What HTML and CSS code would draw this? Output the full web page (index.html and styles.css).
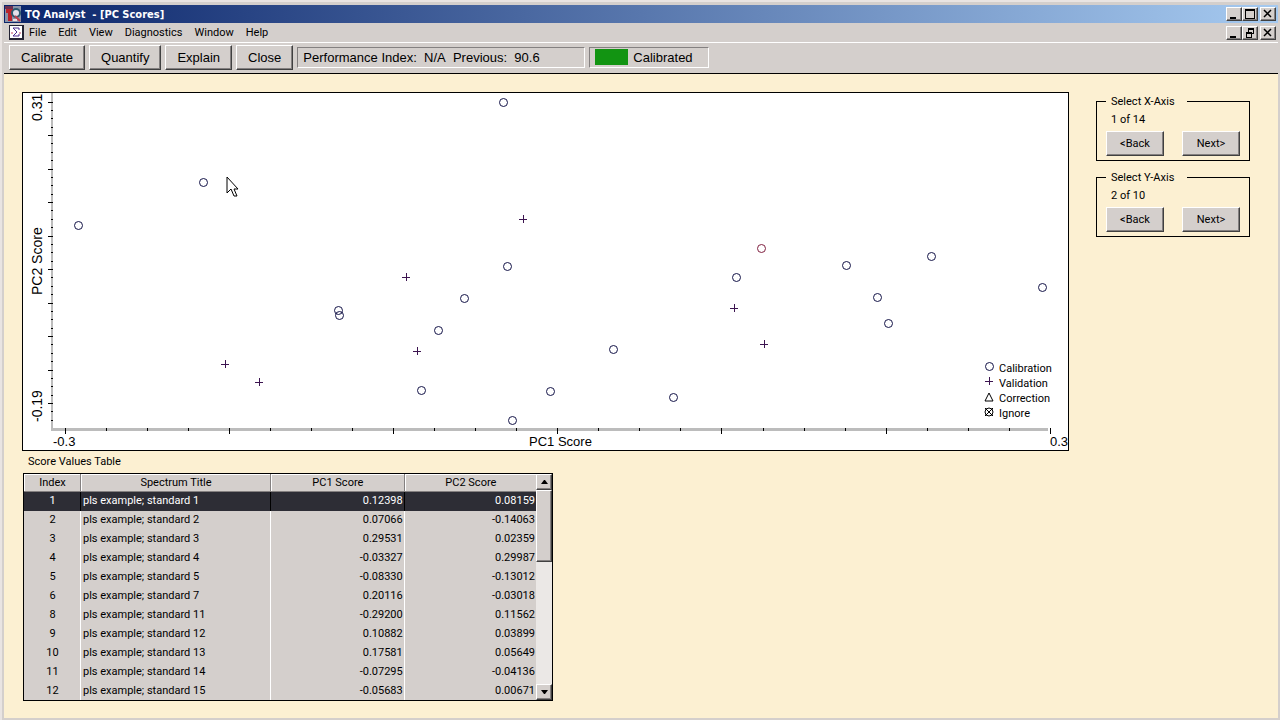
FILE: index.html
```html
<!DOCTYPE html>
<html lang="en">
<head>
    <meta charset="UTF-8">
    <meta name="viewport" content="width=device-width, initial-scale=1.0">
    <title>TQ Analyst - [PC Scores]</title>
    <link rel="stylesheet" href="styles.css">
</head>
<body>
    <header class="title-bar">
        <svg class="app-icon" viewBox="0 0 16 16">
            <rect width="16" height="16" fill="#8a93a8"></rect>
            <path d="M0 0h8v3H0z" fill="#6c3050"></path>
            <path d="M1 3h8v4H7v8H3V7H1z" fill="#b8242c"></path>
            <circle cx="11" cy="7" r="4" fill="#e4e0ea" stroke="#2c5a70" stroke-width="2"></circle>
            <path d="M10 10l5 5" stroke="#c0404c" stroke-width="2"></path>
            <path d="M8 13h4v2H8z" fill="#f0dce0"></path>
        </svg>
        <h1>TQ Analyst&nbsp; - [PC Scores]</h1>
        <div class="window-buttons">
            <button class="window-button" aria-label="Minimize"><svg viewBox="0 0 12 10"><path d="M2 8h6v2H2z"></path></svg></button>
            <button class="window-button" aria-label="Maximize"><svg viewBox="0 0 12 10"><path fill-rule="evenodd" d="M1 0h10v10H1zM2 2v7h8V2z"></path></svg></button>
            <button class="window-button close" aria-label="Close"><svg viewBox="0 0 12 10"><path class="cross" d="M2 1l7 7M9 1l-7 7"></path></svg></button>
        </div>
    </header>

    <nav class="menu-bar">
        <svg class="doc-icon" viewBox="0 0 15 15">
            <path d="M0 0h15v15H0z" fill="#223"></path>
            <path d="M1 1h12v12H1z" fill="#fff"></path>
            <path d="M10 5V3H4l4 4-4 4h6V9" fill="none" stroke="#4a2a8c"></path>
            <path d="M2 8h2M10 8h2" stroke="#c04060"></path>
        </svg>
        <a href="#">File</a>
        <a href="#">Edit</a>
        <a href="#">View</a>
        <a href="#">Diagnostics</a>
        <a href="#">Window</a>
        <a href="#">Help</a>
        <div class="window-buttons">
            <button class="window-button" aria-label="Minimize document"><svg viewBox="0 0 12 10"><path d="M2 8h6v2H2z"></path></svg></button>
            <button class="window-button" aria-label="Restore document"><svg viewBox="0 0 12 10"><path fill-rule="evenodd" d="M4 0h6v6H8v4H2V4h2zM5 2v2h3v1h1V2zM3 6v3h4V6z"></path></svg></button>
            <button class="window-button close" aria-label="Close document"><svg viewBox="0 0 12 10"><path class="cross" d="M2 1l7 7M9 1l-7 7"></path></svg></button>
        </div>
    </nav>

    <div class="toolbar">
        <button class="tool-button">Calibrate</button>
        <button class="tool-button">Quantify</button>
        <button class="tool-button">Explain</button>
        <button class="tool-button">Close</button>
        <div class="status performance">Performance Index:&nbsp; N/A&nbsp; Previous:&nbsp; 90.6</div>
        <div class="status state"><span class="lamp"></span>Calibrated</div>
    </div>

    <main class="workspace">
        <div class="scores">
            <svg class="plot" viewBox="0 0 1045 357">
                <defs>
                    <circle id="calibration" cx="0.5" cy="0.5" r="4"></circle>
                    <path id="validation" d="M-4 0h8M0-4v8"></path>
                </defs>

                <!-- axes -->
                <path class="axis" d="M28 0h2v335h-2zM28 335h997v3H28z"></path>
                <path class="ticks" d="M25 9h5M25 42h5M25 76h5M25 109h5M25 143h5M25 176h5M25 210h5M25 243h5M25 277h5M25 310h5"></path>
                <path class="ticks" d="M28 17h2M28 25h2M28 34h2M28 50h2M28 59h2M28 67h2M28 84h2M28 92h2M28 101h2M28 117h2M28 126h2M28 134h2M28 151h2M28 159h2M28 168h2M28 184h2M28 193h2M28 201h2M28 218h2M28 226h2M28 235h2M28 251h2M28 260h2M28 268h2M28 285h2M28 293h2M28 302h2M28 318h2M28 327h2"></path>
                <path class="ticks" d="M42 335v6M206 335v6M370 335v6M534 335v6M698 335v6M863 335v6M1027 335v6"></path>
                <path class="ticks" d="M83 335v3M124 335v3M165 335v3M247 335v3M288 335v3M329 335v3M411 335v3M452 335v3M493 335v3M575 335v3M616 335v3M657 335v3M740 335v3M781 335v3M822 335v3M904 335v3M945 335v3M986 335v3"></path>
                <text class="axis-text" x="30" y="353">-0.3</text>
                <text class="axis-text" x="506" y="353">PC1 Score</text>
                <text class="axis-text" x="1027" y="353">0.3</text>
                <text class="axis-text side" transform="translate(19 28) rotate(-90)">0.31</text>
                <text class="axis-text side" transform="translate(19 202) rotate(-90)">PC2 Score</text>
                <text class="axis-text side" transform="translate(19 329) rotate(-90)">-0.19</text>

                <g class="calibration">
                    <use href="#calibration" x="55" y="132"></use>
                    <use href="#calibration" x="180" y="89"></use>
                    <use href="#calibration" x="480" y="9"></use>
                    <use href="#calibration" x="484" y="173"></use>
                    <use href="#calibration" x="441" y="205"></use>
                    <use href="#calibration" x="315" y="217"></use>
                    <use href="#calibration" x="316" y="222"></use>
                    <use href="#calibration" x="415" y="237"></use>
                    <use href="#calibration" x="398" y="297"></use>
                    <use href="#calibration" x="489" y="327"></use>
                    <use href="#calibration" x="527" y="298"></use>
                    <use href="#calibration" x="590" y="256"></use>
                    <use href="#calibration" x="650" y="304"></use>
                    <use href="#calibration" x="713" y="184"></use>
                    <use href="#calibration" x="823" y="172"></use>
                    <use href="#calibration" x="854" y="204"></use>
                    <use href="#calibration" x="865" y="230"></use>
                    <use href="#calibration" x="908" y="163"></use>
                    <use href="#calibration" x="1019" y="194"></use>
                </g>
                <use class="selected" href="#calibration" x="738" y="155"></use>
                <g class="validation">
                    <use href="#validation" x="500" y="126"></use>
                    <use href="#validation" x="383" y="184"></use>
                    <use href="#validation" x="394" y="258"></use>
                    <use href="#validation" x="202" y="271"></use>
                    <use href="#validation" x="236" y="289"></use>
                    <use href="#validation" x="711" y="215"></use>
                    <use href="#validation" x="741" y="251"></use>
                </g>

                <!-- legend -->
                <use class="calibration" href="#calibration" x="966" y="273"></use>
                <use class="validation" href="#validation" x="966" y="288"></use>
                <path class="mark" d="M966 300l4 8h-8z"></path>
                <g class="mark">
                    <circle cx="966" cy="319" r="4"></circle>
                    <path d="M962 315l8 8M970 315l-8 8"></path>
                </g>
                <text class="legend-text" x="976" y="279">Calibration</text>
                <text class="legend-text" x="976" y="294">Validation</text>
                <text class="legend-text" x="976" y="309">Correction</text>
                <text class="legend-text" x="976" y="324">Ignore</text>

                <!-- pointer -->
                <path class="pointer" d="M204 84v16l4-4 3 7h3l-3-7h4z"></path>
            </svg>

            <h2 id="table-title">Score Values Table</h2>
            <div class="table-frame">
                <table class="score-table" aria-labelledby="table-title">
                    <thead>
                        <tr><th class="index">Index</th><th class="title">Spectrum Title</th><th>PC1 Score</th><th>PC2 Score</th></tr>
                    </thead>
                    <tbody>
                        <tr class="current"><td>1</td><td>pls example; standard 1</td><td>0.12398</td><td>0.08159</td></tr>
                        <tr><td>2</td><td>pls example; standard 2</td><td>0.07066</td><td>-0.14063</td></tr>
                        <tr><td>3</td><td>pls example; standard 3</td><td>0.29531</td><td>0.02359</td></tr>
                        <tr><td>4</td><td>pls example; standard 4</td><td>-0.03327</td><td>0.29987</td></tr>
                        <tr><td>5</td><td>pls example; standard 5</td><td>-0.08330</td><td>-0.13012</td></tr>
                        <tr><td>6</td><td>pls example; standard 7</td><td>0.20116</td><td>-0.03018</td></tr>
                        <tr><td>8</td><td>pls example; standard 11</td><td>-0.29200</td><td>0.11562</td></tr>
                        <tr><td>9</td><td>pls example; standard 12</td><td>0.10882</td><td>0.03899</td></tr>
                        <tr><td>10</td><td>pls example; standard 13</td><td>0.17581</td><td>0.05649</td></tr>
                        <tr><td>11</td><td>pls example; standard 14</td><td>-0.07295</td><td>-0.04136</td></tr>
                        <tr><td>12</td><td>pls example; standard 15</td><td>-0.05683</td><td>0.00671</td></tr>
                    </tbody>
                </table>
                <div class="scrollbar">
                    <button class="scroll-button" aria-label="Scroll up"><svg viewBox="0 0 7 4"><path d="M3 0h1l3 4H0z"></path></svg></button>
                    <div class="scroll-thumb"></div>
                    <button class="scroll-button down" aria-label="Scroll down"><svg viewBox="0 0 7 4"><path d="M0 0h7L4 4H3z"></path></svg></button>
                </div>
            </div>
        </div>

        <aside class="axis-panel">
            <fieldset>
                <legend>Select X-Axis</legend>
                <p>1 of 14</p>
                <div class="axis-buttons">
                    <button>&lt;Back</button>
                    <button>Next&gt;</button>
                </div>
            </fieldset>
            <fieldset>
                <legend>Select Y-Axis</legend>
                <p>2 of 10</p>
                <div class="axis-buttons">
                    <button>&lt;Back</button>
                    <button>Next&gt;</button>
                </div>
            </fieldset>
        </aside>
    </main>
</body>
</html>
```
FILE: styles.css
```css
* {
    box-sizing: border-box;
}
body {
    display: flex;
    flex-direction: column;
    min-height: 100vh;
    margin: 0;
    padding: 5px 2px 2px 4px;
    background: #d4cfcc;
    color: #000;
    font-family: Roboto, "Liberation Sans", Arial, sans-serif;
    font-size: 11px;
    box-shadow: inset 2px 2px #e9e4e2;
}
h1, h2, p {
    margin: 0;
    font-size: 11px;
    font-weight: normal;
}
button {
    padding: 0;
    border: 1px solid;
    border-color: #fff #404040 #404040 #fff;
    background: #d4cfcc;
    box-shadow: inset -1px -1px #848080;
    color: #000;
    font: inherit;
}

.title-bar {
    display: flex;
    align-items: center;
    gap: 4px;
    height: 18px;
    padding: 0 2px 0 1px;
    background: linear-gradient(to right, #0a246a, #a6caf0);
    color: #fff;
}
.title-bar h1 {
    font-family: "DejaVu Sans Condensed", Tahoma, sans-serif;
    font-weight: bold;
}
.app-icon {
    width: 16px;
    height: 16px;
}
.window-buttons {
    display: flex;
    margin-left: auto;
}
.window-button {
    display: flex;
    width: 16px;
    height: 14px;
    padding: 1px;
}
.window-button.close {
    margin-left: 2px;
}
.window-button svg {
    width: 12px;
    height: 10px;
}
.cross {
    fill: none;
    stroke: #000;
    stroke-width: 1.5;
}

.menu-bar {
    display: flex;
    align-items: center;
    gap: 12px;
    height: 20px;
    padding: 0 2px 0 5px;
    border-bottom: 1px solid #fff;
}
.menu-bar a {
    color: #000;
    text-decoration: none;
}
.doc-icon {
    width: 15px;
    height: 15px;
    margin-right: -7px;
}

.toolbar {
    display: flex;
    align-items: center;
    gap: 4px;
    height: 31px;
    padding: 0 5px 2px;
    border-bottom: 1px solid #000;
    font-family: "Liberation Sans", Arial, sans-serif;
    font-size: 13px;
}
.tool-button {
    height: 25px;
    padding: 0 11px;
}
.status {
    display: flex;
    align-items: center;
    gap: 5px;
    height: 21px;
    padding: 0 5px;
    border: 1px solid;
    border-color: #848080 #fff #fff #848080;
}
.performance {
    width: 288px;
}
.state {
    width: 120px;
}
.lamp {
    width: 33px;
    height: 16px;
    background: #129412;
}

.workspace {
    display: flex;
    flex: 1;
    align-items: flex-start;
    gap: 27px;
    padding: 18px 28px 17px 18px;
    background: #fcf0d2;
}
.scores {
    flex: 1;
}
.plot {
    display: block;
    width: 100%;
    border: 1px solid #000;
    background: #fff;
}
.axis {
    fill: #bcbcbc;
}
.ticks {
    stroke: #000;
    shape-rendering: crispEdges;
}
.axis-text {
    font-family: "Liberation Sans", Arial, sans-serif;
    font-size: 13px;
}
.axis-text.side {
    font-size: 14px;
}
.legend-text {
    font-size: 11px;
}
.calibration, .validation, .selected, .mark {
    fill: none;
    stroke: #141448;
}
.validation {
    stroke: #3c1450;
    shape-rendering: crispEdges;
}
.selected {
    stroke: #802040;
}
.mark {
    stroke: #000;
}
.pointer {
    fill: #fff;
    stroke: #000;
}

.scores h2 {
    padding: 5px 6px;
    line-height: 12px;
}
.table-frame {
    display: flex;
    width: 530px;
    max-width: 100%;
    height: 228px;
    margin-left: 1px;
    border: 1px solid #000;
    overflow: hidden;
}
.score-table {
    flex: 1;
    align-self: flex-start;
    border-collapse: separate;
    border-spacing: 0;
    table-layout: fixed;
    background: #d4cfcc;
}
.score-table th, .score-table td {
    height: 19px;
    padding: 0 1px 0 2px;
    border-right: 1px solid #fff;
    line-height: 18px;
    text-align: right;
    vertical-align: top;
}
.score-table th {
    height: 18px;
    border-right-color: #848080;
    border-bottom: 1px solid #848080;
    box-shadow: inset 1px 1px #fff;
    font-weight: normal;
    line-height: 17px;
    text-align: center;
}
.score-table th:last-child, .score-table td:last-child {
    border-right: 0;
}
.score-table .index {
    width: 57px;
}
.score-table .title {
    width: 190px;
}
.score-table td:first-child {
    text-align: center;
}
.score-table td:nth-child(2) {
    text-align: left;
}
.score-table .current td {
    border-color: #000;
    background: #2d2d35;
    color: #fff;
}
.scrollbar {
    display: flex;
    flex-direction: column;
    width: 16px;
    background: #ebe8e6;
}
.scroll-button {
    display: flex;
    align-items: center;
    justify-content: center;
    height: 16px;
}
.scroll-button.down {
    margin-top: auto;
}
.scroll-button svg {
    width: 7px;
    height: 4px;
}
.scroll-thumb {
    height: 72px;
    border: 1px solid;
    border-color: #fff #404040 #404040 #fff;
    background: #d4cfcc;
    box-shadow: inset -1px -1px #848080;
}

.axis-panel {
    display: flex;
    flex-direction: column;
    gap: 10px;
    width: 154px;
    padding-top: 3px;
}
fieldset {
    min-width: 0;
    margin: 0;
    padding: 5px 9px 4px;
    border: 1px solid #000;
}
legend {
    width: 81px;
    padding: 0 5px;
    line-height: 13px;
}
fieldset p {
    padding: 0 5px 5px;
    line-height: 13px;
}
.axis-buttons {
    display: flex;
    justify-content: space-between;
}
.axis-buttons button {
    width: 58px;
    height: 25px;
}
```
